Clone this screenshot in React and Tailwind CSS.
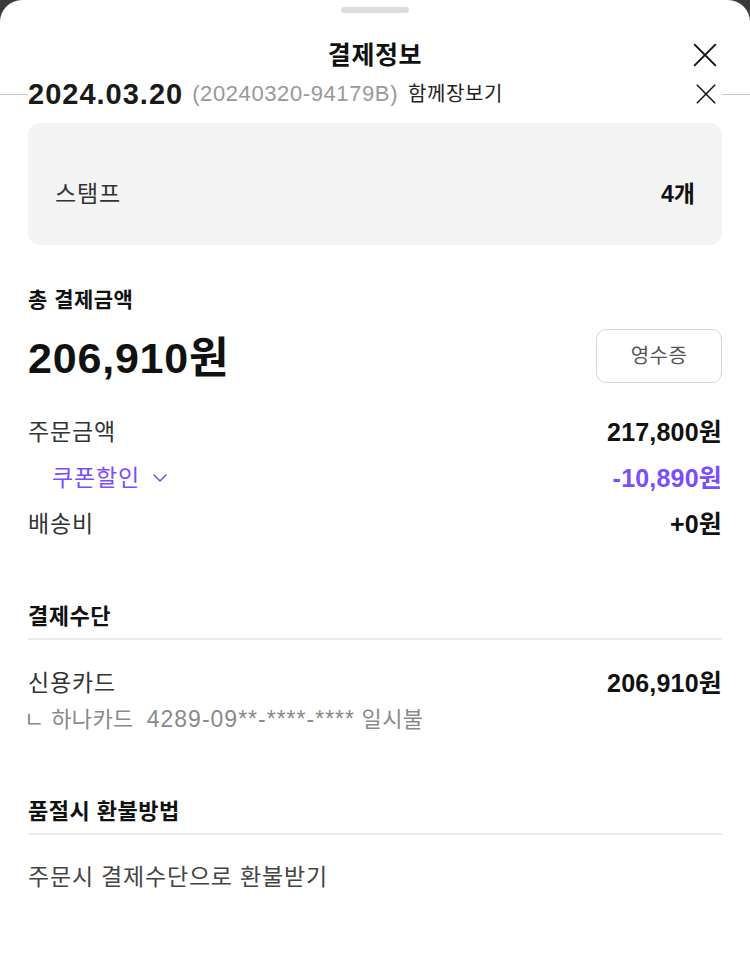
import { ChevronDown } from "lucide-react";

const font = { fontFamily: '"Liberation Sans", "Noto Sans CJK KR", sans-serif' };

function Row({ label, value, labelClass = "text-[#333]", valueClass = "text-[#111]" }) {
  return (
    <div className="flex items-center justify-between h-[30px]">
      <span className={`text-[23px] leading-[30px] tracking-[0.8px] ${labelClass}`}>{label}</span>
      <span className={`text-[25px] leading-[30px] font-bold tracking-[0.2px] ${valueClass}`}>{value}</span>
    </div>
  );
}

function CloseIcon({ size, stroke = 2 }) {
  return (
    <svg width={size} height={size} viewBox="0 0 24 24" fill="none" stroke="#111" strokeWidth={stroke}>
      <path d="M2 2L22 22M22 2L2 22" />
    </svg>
  );
}

export default function App() {
  return (
    <div className="min-h-[969px] bg-[#3b3b3b]" style={font}>
      <div className="min-h-[969px] bg-white rounded-t-[22px] flex flex-col">
        {/* handle */}
        <div className="flex justify-center pt-[7px]">
          <div className="w-[68px] h-[6px] rounded-full bg-[#dcdcdc]" />
        </div>

        {/* title */}
        <div className="relative flex justify-center items-center h-[44px] mt-[20px]">
          <h1 className="text-[25px] leading-[44px] font-bold text-[#111] tracking-[0.6px]">결제정보</h1>
          <div className="absolute right-[32px] top-[9px]">
            <CloseIcon size={26} stroke={1.8} />
          </div>
        </div>

        {/* order row */}
        <div className="flex items-center h-[28px] mt-[3px]">
          <div className="w-[28px] h-[1px] bg-[#c8ccd0]" />
          <span className="text-[29px] leading-[28px] font-bold text-[#1a1a1a] tracking-[1px]">
            2024.03.20
          </span>
          <span className="ml-[9px] text-[22px] leading-[28px] text-[#999] tracking-[0.6px]">(20240320-94179B)</span>
          <span className="ml-[10px] text-[20px] leading-[28px] text-[#222] tracking-[0.6px]">함께장보기</span>
          <div className="flex-1" />
          <div className="mr-[5px]">
            <CloseIcon size={22} stroke={1.6} />
          </div>
          <div className="w-[28px] h-[1px] bg-[#c8ccd0]" />
        </div>

        <div className="px-[28px]">
          {/* stamp box */}
          <div className="mt-[15px] h-[122px] rounded-[12px] bg-[#f4f4f4] flex items-center justify-between px-[27px] pt-[20px]">
            <span className="text-[23px] leading-[30px] text-[#333] tracking-[0.8px]">스탬프</span>
            <span className="text-[23px] leading-[30px] font-bold text-[#111]">4개</span>
          </div>

          {/* total */}
          <h2 className="mt-[43px] h-[24px] text-[21px] leading-[24px] font-bold text-[#111] tracking-[0.5px]">총 결제금액</h2>
          <div className="mt-[17px] flex items-center justify-between h-[54px]">
            <span className="text-[43px] leading-[54px] pt-[4px] font-bold text-[#111] tracking-[0.8px]">206,910원</span>
            <button className="w-[126px] h-[54px] rounded-[10px] border border-[#d6d6d6] text-[20px] text-[#555] tracking-[0.5px]">
              영수증
            </button>
          </div>

          <div className="mt-[34px] flex flex-col gap-[16px]">
            <Row label="주문금액" value="217,800원" />
            <div className="flex items-center justify-between h-[30px]">
              <span className="flex items-center gap-[8px] pl-[24px] text-[23px] leading-[30px] text-[#7c4dff] tracking-[0.8px]">
                쿠폰할인
                <ChevronDown size={24} strokeWidth={1.6} />
              </span>
              <span className="text-[25px] leading-[30px] font-bold text-[#7c4dff] tracking-[0.2px]">-10,890원</span>
            </div>
            <Row label="배송비" value="+0원" />
          </div>

          {/* payment method */}
          <h2 className="mt-[66px] text-[22px] leading-[24px] font-bold text-[#111] pb-[9px] border-b-2 border-[#ebebeb] tracking-[0.5px]">결제수단</h2>
          <div className="mt-[28px]">
            <Row label="신용카드" value="206,910원" />
            <p className="mt-[8px] -ml-[4px] text-[22px] leading-[26px] text-[#8a8a8a] tracking-[0.4px]">
              ㄴ 하나카드&nbsp;&nbsp;<span className="text-[23px] tracking-[1px]">4289-09**-****-****</span> 일시불
            </p>
          </div>

          {/* refund */}
          <h2 className="mt-[67px] text-[22px] leading-[24px] font-bold text-[#111] pb-[9px] border-b-2 border-[#ebebeb] tracking-[0.5px]">품절시 환불방법</h2>
          <p className="mt-[27px] text-[23px] leading-[30px] text-[#444] tracking-[0.8px]">주문시 결제수단으로 환불받기</p>
        </div>
      </div>
    </div>
  );
}
